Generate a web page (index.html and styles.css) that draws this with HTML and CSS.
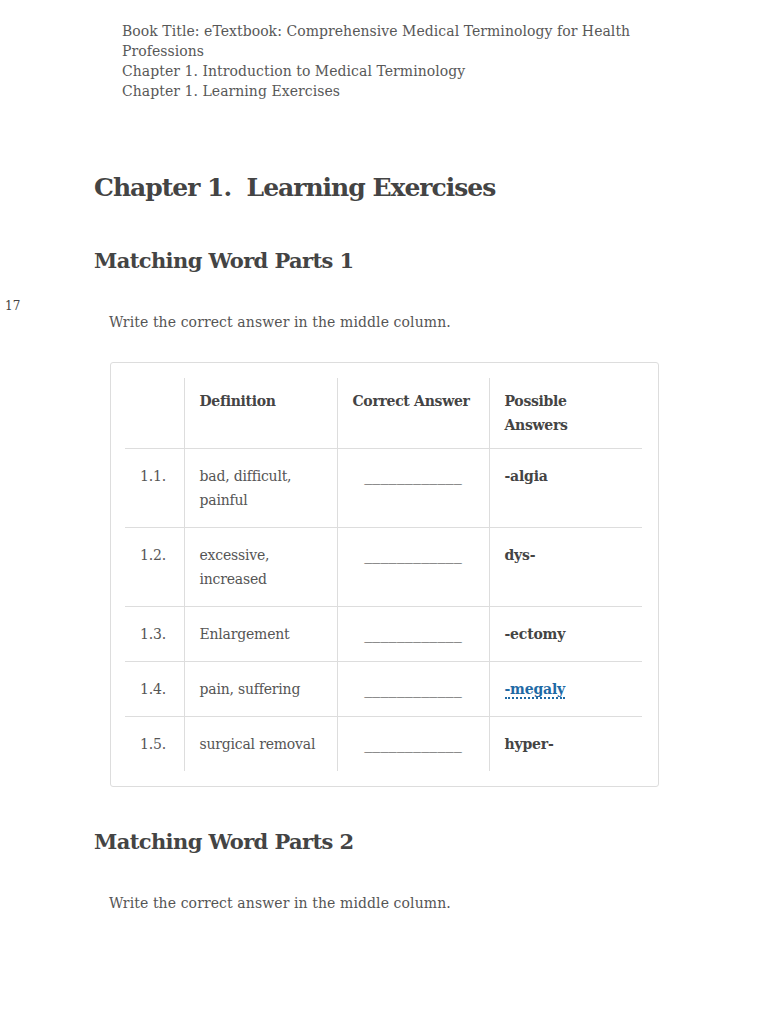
FILE: index.html
```html
<!DOCTYPE html>
<html lang="en">
<head>
<meta charset="utf-8">
<title>Chapter 1. Learning Exercises</title>
<link rel="stylesheet" href="styles.css">
</head>
<body>
<div class="page">
  <div class="breadcrumb">
    <div>Book Title: eTextbook: Comprehensive Medical Terminology for Health Professions</div>
    <div>Chapter 1. Introduction to Medical Terminology</div>
    <div>Chapter 1. Learning Exercises</div>
  </div>

  <h1 class="title">Chapter 1.&nbsp; Learning Exercises</h1>

  <h2 class="section-title">Matching Word Parts 1</h2>
  <div class="para-wrap">
    <span class="page-marker">17</span>
    <p class="para">Write the correct answer in the middle column.</p>
  </div>

  <div class="table-box">
    <table class="ex-table">
      <colgroup>
        <col class="c-num">
        <col class="c-def">
        <col class="c-ans">
        <col class="c-pos">
      </colgroup>
      <thead>
        <tr>
          <th></th>
          <th>Definition</th>
          <th>Correct Answer</th>
          <th>Possible Answers</th>
        </tr>
      </thead>
      <tbody>
        <tr>
          <td class="num">1.1.</td>
          <td>bad, difficult, painful</td>
          <td class="blank">____________</td>
          <td class="opt">-algia</td>
        </tr>
        <tr>
          <td class="num">1.2.</td>
          <td>excessive, increased</td>
          <td class="blank">____________</td>
          <td class="opt">dys-</td>
        </tr>
        <tr>
          <td class="num">1.3.</td>
          <td>Enlargement</td>
          <td class="blank">____________</td>
          <td class="opt">-ectomy</td>
        </tr>
        <tr>
          <td class="num">1.4.</td>
          <td>pain, suffering</td>
          <td class="blank">____________</td>
          <td class="opt"><a class="term" href="#">-megaly</a></td>
        </tr>
        <tr>
          <td class="num">1.5.</td>
          <td>surgical removal</td>
          <td class="blank">____________</td>
          <td class="opt">hyper-</td>
        </tr>
      </tbody>
    </table>
  </div>

  <h2 class="section-title second">Matching Word Parts 2</h2>
  <p class="para">Write the correct answer in the middle column.</p>
</div>
</body>
</html>
```

FILE: styles.css
```css
html, body {
  margin: 0;
  padding: 0;
  background: #ffffff;
}

body {
  font-family: "DejaVu Serif", "Liberation Serif", serif;
  color: #555555;
  font-size: 14px;
}

.page {
  padding: 21px 0 60px 94px;
}

.breadcrumb {
  margin-left: 28px;
  width: 545px;
  font-size: 14px;
  line-height: 20px;
  color: #585858;
  letter-spacing: 0.05px;
}

.title {
  margin: 69px 0 0 0;
  font-size: 25px;
  line-height: 36px;
  font-weight: bold;
  color: #444444;
  letter-spacing: -1px;
}

.section-title {
  margin: 39px 0 0 0;
  font-size: 21px;
  line-height: 32px;
  font-weight: bold;
  color: #444444;
  letter-spacing: -0.6px;
}

.para-wrap {
  position: relative;
}

.page-marker {
  position: absolute;
  left: -89px;
  top: -12px;
  font-size: 12px;
  line-height: 16px;
  color: #444444;
}

.para {
  margin: 33px 0 0 15px;
  font-size: 14px;
  line-height: 24px;
  color: #555555;
  letter-spacing: 0.1px;
}

.table-box {
  margin: 28px 0 0 16px;
  width: 517px;
  padding: 15px 16px 15px 14px;
  border: 1px solid #dddddd;
  border-radius: 3px;
}

.ex-table {
  width: 517px;
  border-collapse: collapse;
  table-layout: fixed;
  font-size: 14px;
  line-height: 24px;
  letter-spacing: -0.2px;
}

.c-num { width: 59px; }
.c-def { width: 153px; }
.c-ans { width: 152px; }
.c-pos { width: 153px; }

.ex-table th,
.ex-table td {
  padding: 10px 15px 14px 15px;
  vertical-align: top;
  text-align: left;
  border-left: 1px solid #dddddd;
  border-top: 1px solid #dddddd;
}

.ex-table th:first-child,
.ex-table td:first-child {
  border-left: none;
}

.ex-table thead th {
  border-top: none;
  padding-top: 11px;
  padding-bottom: 11px;
  font-weight: bold;
  color: #444444;
  letter-spacing: -0.3px;
}

.ex-table tbody td {
  padding-top: 15px;
  padding-bottom: 15px;
  color: #555555;
}

.ex-table td.num {
  color: #555555;
}

.ex-table td.blank {
  text-align: center;
  color: #333333;
  font-size: 16.3px;
  letter-spacing: 0;
}

.ex-table td.opt {
  font-weight: bold;
  color: #444444;
}

.term {
  color: #1f6aa5;
  text-decoration: none;
  border-bottom: 2px dotted #1f6aa5;
}

.second {
  margin-top: 39px;
}
```
